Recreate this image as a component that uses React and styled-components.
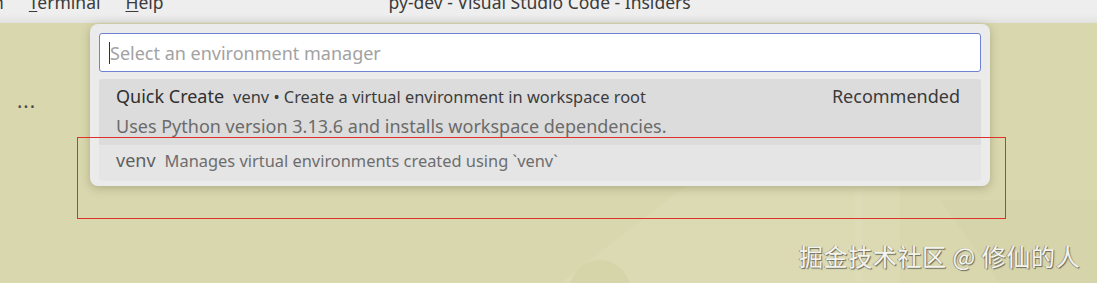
import React from "react";
import styled, { createGlobalStyle } from "styled-components";

const Global = createGlobalStyle`
  html, body {
    margin: 0;
    padding: 0;
    background: #d9d7ae;
  }
  body {
    font-family: "Noto Sans", "Open Sans", sans-serif;
  }
`;

const Page = styled.div`
  position: relative;
  width: 1097px;
  height: 283px;
  overflow: hidden;
  background: #d9d7ae;
`;

const TitleBar = styled.div`
  height: 23px;
  background: linear-gradient(#eeeeee 0, #eeeeee 14px, #e2e2e0 23px);
  display: flex;
  align-items: flex-start;
  overflow: hidden;
  color: #3b3b3b;
  font-size: 17.5px;
  line-height: 18px;
`;

const Menu = styled.div`
  display: flex;
  gap: 25px;
  margin-top: -7px;
  margin-left: -7px;
`;

const MenuItem = styled.span`
  u {
    text-decoration: underline;
    text-underline-offset: 2px;
  }
`;

const WindowTitle = styled.span`
  margin-top: -7px;
  margin-left: 225px;
`;

const Body = styled.div`
  display: flex;
  height: 260px;
`;

const Sidebar = styled.div`
  width: 60px;
  padding-top: 64px;
  padding-left: 17px;
  color: #4a4a4a;
  font-size: 20px;
  letter-spacing: 1px;
`;

const Backdrop = styled.svg`
  position: absolute;
  left: 0;
  top: 0;
  width: 1097px;
  height: 283px;
`;

const QuickPick = styled.div`
  position: absolute;
  left: 90px;
  top: 24px;
  width: 900px;
  box-sizing: border-box;
  padding: 9px 9px 5px;
  background: #ebebeb;
  border-radius: 8px;
  box-shadow: 0 2px 10px rgba(90, 88, 50, 0.35);
  display: flex;
  flex-direction: column;
  gap: 7px;
`;

const Input = styled.div`
  height: 39px;
  box-sizing: border-box;
  background: #ffffff;
  border: 1px solid #6f82d4;
  border-radius: 3px;
  display: flex;
  align-items: center;
  padding-left: 9px;
  font-size: 18px;
  color: #a2a2a2;
`;

const Caret = styled.span`
  width: 1px;
  height: 22px;
  background: #333;
`;

const List = styled.div`
  display: flex;
  flex-direction: column;
`;

const Row = styled.div`
  background: ${(p) => (p.$active ? "#dcdcdc" : "#e5e5e5")};
  padding: ${(p) => (p.$active ? "5px 21px 6px 17px" : "3px 17px 5px")};
  display: flex;
  flex-direction: column;
  border-radius: ${(p) => (p.$active ? "3px 3px 0 0" : "0 0 4px 4px")};
`;

const Line = styled.div`
  display: flex;
  align-items: baseline;
  gap: 9px;
  height: 28px;
`;

const Label = styled.span`
  font-size: 18px;
  color: ${(p) => (p.$muted ? "#5f5f5f" : "#2f2f2f")};
`;

const Desc = styled.span`
  font-size: 16.4px;
  color: ${(p) => (p.$muted ? "#6d6d6d" : "#3c3c3c")};
`;

const Badge = styled.span`
  margin-left: auto;
  font-size: 18px;
  color: #3a3a3a;
`;

const Detail = styled.div`
  font-size: 18px;
  color: #6b6b6b;
  height: 27px;
  line-height: 28px;
`;

const Highlight = styled.div`
  position: absolute;
  left: 77px;
  top: 137px;
  width: 929px;
  height: 82px;
  box-sizing: border-box;
  border: 1px solid #e0302a;
  pointer-events: none;
`;

const Watermark = styled.div`
  position: absolute;
  left: 799px;
  top: 238px;
  font-family: "Noto Sans CJK SC", "Noto Sans", sans-serif;
  font-size: 24px;
  color: #f4f4ee;
  text-shadow: 1px 1px 1px #6a6a5a, -1px 0 0 #9a9a88;
  letter-spacing: 0.6px;
  white-space: nowrap;
`;

export default function App() {
  return (
    <Page>
      <Global />
      <Backdrop viewBox="0 0 1097 283">
        <polygon points="560,283 720,160 900,160 900,283" fill="#dddbb5" opacity="0.7" />
        <polygon points="940,200 1097,200 1097,283 1000,283" fill="#d4d2a6" opacity="0.6" />
        <rect x="855" y="180" width="8" height="103" fill="#dedcb7" opacity="0.8" />
        <circle cx="600" cy="290" r="30" fill="#d3d1a5" opacity="0.7" />
      </Backdrop>
      <TitleBar>
        <Menu>
          <MenuItem>n</MenuItem>
          <MenuItem>
            <u>T</u>erminal
          </MenuItem>
          <MenuItem>
            <u>H</u>elp
          </MenuItem>
        </Menu>
        <WindowTitle>py-dev - Visual Studio Code - Insiders</WindowTitle>
      </TitleBar>
      <Body>
        <Sidebar>...</Sidebar>
      </Body>
      <QuickPick>
        <Input>
          <Caret />
          Select an environment manager
        </Input>
        <List>
          <Row $active>
            <Line>
              <Label>Quick Create</Label>
              <Desc>venv • Create a virtual environment in workspace root</Desc>
              <Badge>Recommended</Badge>
            </Line>
            <Detail>Uses Python version 3.13.6 and installs workspace dependencies.</Detail>
          </Row>
          <Row>
            <Line>
              <Label $muted>venv</Label>
              <Desc $muted>Manages virtual environments created using `venv`</Desc>
            </Line>
          </Row>
        </List>
      </QuickPick>
      <Highlight />
      <Watermark>掘金技术社区 @ 修仙的人</Watermark>
    </Page>
  );
}
